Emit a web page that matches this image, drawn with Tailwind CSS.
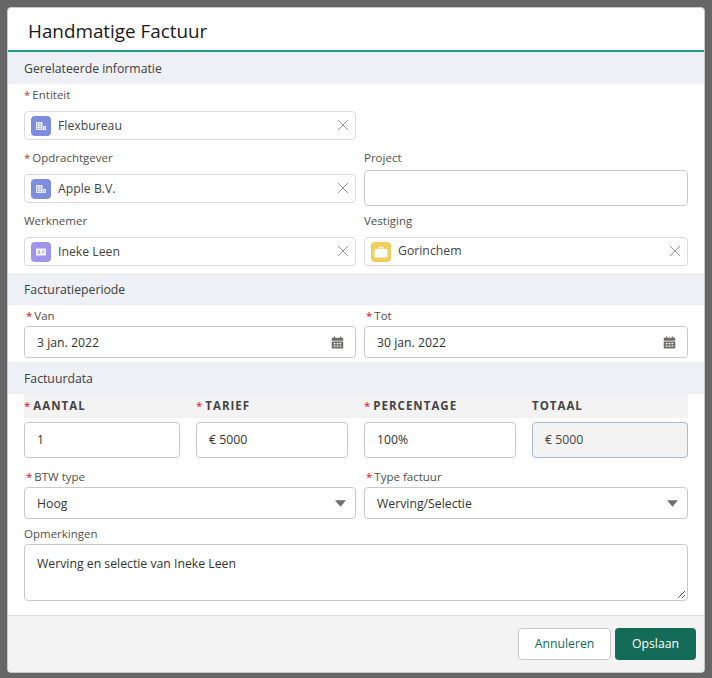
<!DOCTYPE html>
<html lang="en">
<head>
    <meta charset="UTF-8">
    <script src="https://cdn.jsdelivr.net/npm/@tailwindcss/browser@4"></script>
    <title>Handmatige Factuur</title>
</head>
<body class="bg-[#666666] font-['Open_Sans',sans-serif] text-[12.25px] leading-[18px] text-[#3e3e3c] overflow-hidden">
    <div class="w-[698px] h-[666px] ml-[7px] mt-[7px] border border-[#c9c9c9] rounded-[4px] bg-white flex flex-col overflow-hidden">
        <!-- Header -->
        <header class="h-[44px] shrink-0 border-b-2 border-[#1c9f85] pl-5 pt-[10px] text-[18.85px] leading-[27px] text-[#181818]">Handmatige Factuur</header>

        <!-- Gerelateerde informatie -->
        <div class="h-8 shrink-0 bg-[#edf0f4] px-4 pt-[1px] flex items-center">Gerelateerde informatie</div>
        <div class="h-[189px] shrink-0 px-4 grid grid-cols-[332px_324px] gap-x-2 content-start">
            <div class="col-span-2 h-[27px] pb-[5px] flex items-center text-[11.5px] text-[#514f4d]"><span class="text-[#c23934] mr-[2px]">*</span>Entiteit</div>
            <div class="col-span-1 h-[29px] border border-[#dddbda] rounded-[4px] flex items-center pl-[6px] pr-[6px] text-[#444444]">
                <span class="size-5 rounded-[4px] bg-[#7f8de1] flex items-center justify-center mr-[7px]">
                    <svg viewBox="0 0 12 12" class="size-3" fill="#fff" opacity=".85"><path d="M1 2h6.500v8H1zM8 6h3v4H8z"/><path fill="#7f8de1" d="M2 3.200h1.200v1.200H2zM4.500 3.200h1.200v1.200H4.500zM2 5.500h1.200v1.200H2zM4.500 5.500h1.200v1.200H4.500zM2 7.800h1.200V9H2zM4.500 7.800h1.200V9H4.500zM9 7.500h1v1H9z"/></svg>
                </span>
                <span class="flex-1">Flexbureau</span>
                <svg viewBox="0 0 12 12" class="size-3 -mt-[1px]" stroke="#969492" stroke-width="1" fill="none"><path d="M1 1l10 10M11 1L1 11"/></svg>
            </div>
            <div></div>
            <div class="h-[34px] pt-[2px] flex items-center text-[11.5px] text-[#514f4d]"><span class="text-[#c23934] mr-[2px]">*</span>Opdrachtgever</div>
            <div class="h-[34px] pt-[2px] flex items-center text-[11.5px] text-[#514f4d]">Project</div>
            <div class="h-[29px] border border-[#dddbda] rounded-[4px] flex items-center pl-[6px] pr-[6px] text-[#444444]">
                <span class="size-5 rounded-[4px] bg-[#7f8de1] flex items-center justify-center mr-[7px]">
                    <svg viewBox="0 0 12 12" class="size-3" fill="#fff" opacity=".85"><path d="M1 2h6.500v8H1zM8 6h3v4H8z"/><path fill="#7f8de1" d="M2 3.200h1.200v1.200H2zM4.500 3.200h1.200v1.200H4.500zM2 5.500h1.200v1.200H2zM4.500 5.500h1.200v1.200H4.500zM2 7.800h1.200V9H2zM4.500 7.800h1.200V9H4.500zM9 7.500h1v1H9z"/></svg>
                </span>
                <span class="flex-1">Apple B.V.</span>
                <svg viewBox="0 0 12 12" class="size-3 -mt-[1px]" stroke="#969492" stroke-width="1" fill="none"><path d="M1 1l10 10M11 1L1 11"/></svg>
            </div>
            <div class="h-9 -mt-1 -mb-[3px] border border-[#c9c9c9] rounded-[4px]"></div>
            <div class="h-[34px] pt-[2px] flex items-center text-[11.5px] text-[#514f4d]">Werknemer</div>
            <div class="h-[34px] pt-[2px] flex items-center text-[11.5px] text-[#514f4d]">Vestiging</div>
            <div class="h-[29px] border border-[#dddbda] rounded-[4px] flex items-center pl-[6px] pr-[6px] text-[#444444]">
                <span class="size-5 rounded-[4px] bg-[#a094ed] flex items-center justify-center mr-[7px]">
                    <svg viewBox="0 0 12 12" class="size-3" fill="#fff" opacity=".9"><path fill-rule="evenodd" d="M1 2.500h10v7H1zM2.500 7.500h3c0-1-.6-1.400-1-1.600.4-.7.2-1.900-.5-1.900s-.9 1.200-.5 1.900c-.4.2-1 .6-1 1.600zM7 4.500V5.300h2.500V4.500zM7 6.300V7h2.500v-.7z"/></svg>
                </span>
                <span class="flex-1">Ineke Leen</span>
                <svg viewBox="0 0 12 12" class="size-3 -mt-[1px]" stroke="#969492" stroke-width="1" fill="none"><path d="M1 1l10 10M11 1L1 11"/></svg>
            </div>
            <div class="h-[29px] border border-[#dddbda] rounded-[4px] flex items-center pl-[6px] pr-[6px] text-[#444444]">
                <span class="size-5 rounded-[4px] bg-[#f2cf5b] flex items-center justify-center mr-[7px]">
                    <svg viewBox="0 0 12 12" class="size-3.5" fill="#fff"><path fill-rule="evenodd" d="M4 1.500h4V3.500H11a.5.5 0 0 1 .5.5v6a.8.8 0 0 1-.8.8H1.300a.8.8 0 0 1-.8-.8V4a.5.5 0 0 1 .5-.5H4zM5 2.500v1h2v-1z"/></svg>
                </span>
                <span class="flex-1 -mt-[2px]">Gorinchem</span>
                <svg viewBox="0 0 12 12" class="size-3 -mt-[1px]" stroke="#969492" stroke-width="1" fill="none"><path d="M1 1l10 10M11 1L1 11"/></svg>
            </div>
        </div>

        <!-- Facturatieperiode -->
        <div class="h-8 shrink-0 bg-[#edf0f4] px-4 pt-[1px] flex items-center">Facturatieperiode</div>
        <div class="h-[57px] shrink-0 px-4 grid grid-cols-[332px_324px] gap-x-2 content-start">
            <div class="h-[21px] pl-[2px] flex items-center text-[11.5px] text-[#514f4d]"><span class="text-[#ea001e] mr-[2px]">*</span>Van</div>
            <div class="h-[21px] pl-[2px] flex items-center text-[11.5px] text-[#514f4d]"><span class="text-[#ea001e] mr-[2px]">*</span>Tot</div>
            <div class="h-8 border border-[#c9c9c9] rounded-[4px] flex items-center pl-3 pr-[11px] text-[#333333]">
                <span class="flex-1 pt-[1px]">3 jan. 2022</span>
                <svg viewBox="0 0 14 14" class="size-[13px]" fill="#706e6b"><path fill-rule="evenodd" d="M3 .5h1.500V2h5V.5H11V2h1.500c.5 0 .7.300.7.700V5H.8V2.700c0-.4.200-.7.700-.7H3zM.8 6h12.400v6.800c0 .4-.3.700-.7.700h-11c-.4 0-.7-.3-.7-.7zM3 7.500v1.500h1.800V7.500zM6.100 7.500v1.500h1.800V7.500zM9.200 7.500v1.500H11V7.500zM3 10.200v1.500h1.800v-1.500zM6.100 10.200v1.500h1.800v-1.500zM9.200 10.200v1.500H11v-1.500z"/></svg>
            </div>
            <div class="h-8 border border-[#c9c9c9] rounded-[4px] flex items-center pl-3 pr-[11px] text-[#333333]">
                <span class="flex-1 pt-[1px]">30 jan. 2022</span>
                <svg viewBox="0 0 14 14" class="size-[13px]" fill="#706e6b"><path fill-rule="evenodd" d="M3 .5h1.500V2h5V.5H11V2h1.500c.5 0 .7.300.7.700V5H.8V2.700c0-.4.200-.7.700-.7H3zM.8 6h12.400v6.800c0 .4-.3.700-.7.700h-11c-.4 0-.7-.3-.7-.7zM3 7.500v1.500h1.800V7.500zM6.100 7.500v1.500h1.800V7.500zM9.200 7.500v1.500H11V7.500zM3 10.200v1.500h1.800v-1.500zM6.100 10.200v1.500h1.800v-1.500zM9.200 10.200v1.500H11v-1.500z"/></svg>
            </div>
        </div>

        <!-- Factuurdata -->
        <div class="h-8 shrink-0 bg-[#edf0f4] px-4 pt-[1px] flex items-center">Factuurdata</div>
        <div class="flex-1 px-4">
            <div class="h-6 bg-[#f3f3f3] grid grid-cols-[156px_152px_152px_156px] gap-x-4 items-center text-[11.5px] font-bold tracking-[1px] text-[#444444]">
                <div><span class="text-[#ea001e] font-normal mr-[2px]">*</span>AANTAL</div>
                <div><span class="text-[#ea001e] font-normal mr-[2px]">*</span>TARIEF</div>
                <div><span class="text-[#ea001e] font-normal mr-[2px]">*</span>PERCENTAGE</div>
                <div>TOTAAL</div>
            </div>
            <div class="mt-1 h-9 grid grid-cols-[156px_152px_152px_156px] gap-x-4 text-[#333333]">
                <div class="border border-[#c9c9c9] rounded-[4px] flex items-center pl-3">1</div>
                <div class="border border-[#c9c9c9] rounded-[4px] flex items-center pl-3">€ 5000</div>
                <div class="border border-[#c9c9c9] rounded-[4px] flex items-center pl-3">100%</div>
                <div class="border border-[#a8b8d0] rounded-[4px] bg-[#f3f3f3] flex items-center pl-3 text-[#444444]">€ 5000</div>
            </div>
            <div class="mt-[9px] grid grid-cols-[332px_324px] gap-x-2">
                <div class="h-5 pl-[2px] flex items-center text-[11.5px] text-[#514f4d]"><span class="text-[#ea001e] mr-[2px]">*</span>BTW type</div>
                <div class="h-5 pl-[2px] flex items-center text-[11.5px] text-[#514f4d]"><span class="text-[#ea001e] mr-[2px]">*</span>Type factuur</div>
                <div class="h-8 border border-[#c9c9c9] rounded-[4px] flex items-center pl-3 pr-[9px] text-[#333333]">
                    <span class="flex-1 pt-[1px]">Hoog</span>
                    <svg viewBox="0 0 10 6" class="w-[11px] h-[7px]" fill="#706e6b"><path d="M0 0h10L5 6z"/></svg>
                </div>
                <div class="h-8 border border-[#c9c9c9] rounded-[4px] flex items-center pl-3 pr-[9px] text-[#333333]">
                    <span class="flex-1 pt-[1px]">Werving/Selectie</span>
                    <svg viewBox="0 0 10 6" class="w-[11px] h-[7px]" fill="#706e6b"><path d="M0 0h10L5 6z"/></svg>
                </div>
            </div>
            <div class="mt-[5px] h-5 flex items-center text-[11.5px] text-[#514f4d]">Opmerkingen</div>
            <div class="relative h-[57px] border border-[#c9c9c9] rounded-[4px] pl-3 pt-[10px] text-[#333333]">
                Werving en selectie van Ineke Leen
                <svg viewBox="0 0 9 9" class="absolute right-[1px] bottom-[1px] size-[9px]" stroke="#555" stroke-width="1" fill="none"><path d="M1 8l7-7M5 8l3-3"/></svg>
            </div>
        </div>

        <!-- Footer -->
        <footer class="h-[57px] shrink-0 bg-[#f3f3f3] border-t border-[#dddbda] flex justify-end items-start pt-3 pr-2 gap-1">
            <button class="w-[93px] h-8 bg-white border border-[#c9c9c9] rounded-[4px] text-[#0f6b5a]">Annuleren</button>
            <button class="w-[81px] h-8 bg-[#136b58] rounded-[4px] text-white">Opslaan</button>
        </footer>
    </div>
</body>
</html>
